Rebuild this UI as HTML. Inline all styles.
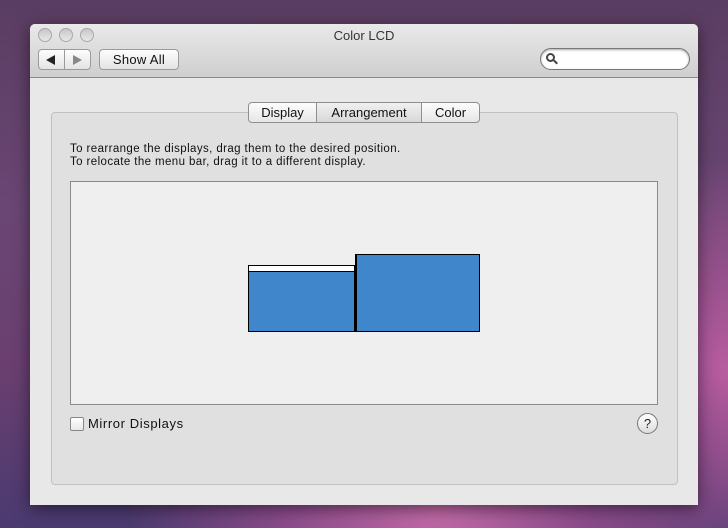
<!DOCTYPE html>
<html><head><style>
*{margin:0;padding:0;box-sizing:border-box}
body{width:728px;height:528px;overflow:hidden;position:relative;font-family:"Liberation Sans",sans-serif;
background:radial-gradient(ellipse at 60% 95%,#c46aa8 0%,#8a4a8a 25%,transparent 50%),radial-gradient(ellipse at 100% 70%,#b85ca0 0%,transparent 40%),linear-gradient(180deg,#5a3d62 0%,#6a4674 40%,#6a3f70 70%,#4a3a70 100%);}
.abs{position:absolute}
.win{left:30px;top:24px;width:668px;height:481px;background:#e8e8e8;border-radius:5px 5px 0 0;box-shadow:0 4px 16px rgba(0,0,0,.5)}
.tb{left:0;top:0;width:668px;height:54px;background:linear-gradient(#e9e9e9,#cfcfcf);border-radius:5px 5px 0 0;border-bottom:1px solid #8a8a8a}
.light{width:14px;height:14px;border-radius:50%;background:linear-gradient(#c8c8c8,#e8e8e8);border:1px solid #a8a8a8;top:4px}
.title{left:0;width:668px;top:4px;text-align:center;font-size:13px;color:#333}
.btn{background:linear-gradient(#fdfdfd,#e4e4e4);border:1px solid #9a9a9a;border-radius:4px;font-size:13px;color:#111;text-align:center}
.group{left:21px;top:88px;width:627px;height:373px;background:#e0e0e0;border:1px solid #c0c0c0;border-radius:4px}
.tab{top:78px;height:21px;font-size:13px;line-height:19px;text-align:center;color:#111;background:linear-gradient(#fdfdfd,#e6e6e6);border:1px solid #8f8f8f}
</style></head><body>
<div class="abs win">
 <div class="abs tb">
  <div class="abs light" style="left:8px"></div>
  <div class="abs light" style="left:29px"></div>
  <div class="abs light" style="left:50px"></div>
  <div class="abs title">Color LCD</div>
  <div class="abs btn" style="left:8px;top:25px;width:53px;height:21px">
   <div class="abs" style="left:25px;top:0;width:1px;height:19px;background:#9a9a9a"></div>
   <div class="abs" style="left:7px;top:5px;width:0;height:0;border-top:5px solid transparent;border-bottom:5px solid transparent;border-right:9px solid #222"></div>
   <div class="abs" style="left:34px;top:5px;width:0;height:0;border-top:5px solid transparent;border-bottom:5px solid transparent;border-left:9px solid #888"></div>
  </div>
  <div class="abs btn" style="left:69px;top:25px;width:80px;height:21px;line-height:19px;letter-spacing:0.3px">Show All</div>
  <div class="abs" style="left:510px;top:24px;width:150px;height:22px;background:#fff;border:1px solid #777;border-radius:11px;box-shadow:inset 0 1px 2px rgba(0,0,0,.35)">
   <div class="abs" style="left:5px;top:4px;width:9px;height:9px;border:2px solid #444;border-radius:50%"></div>
   <div class="abs" style="left:12px;top:12px;width:5px;height:2px;background:#444;transform:rotate(45deg)"></div>
  </div>
 </div>
 <div class="abs group"></div>
 <div class="abs tab" style="left:218px;width:69px;border-radius:4px 0 0 4px">Display</div>
 <div class="abs tab" style="left:286px;width:106px;background:linear-gradient(#f0f0f0,#d8d8d8)">Arrangement</div>
 <div class="abs tab" style="left:391px;width:59px;border-radius:0 4px 4px 0">Color</div>
 <div class="abs" style="left:40px;top:119px;font-size:11.5px;line-height:13px;color:#111;letter-spacing:0.4px">To rearrange the displays, drag them to the desired position.<br>To relocate the menu bar, drag it to a different display.</div>
 <div class="abs" style="left:40px;top:157px;width:588px;height:224px;background:#efefef;border:1px solid #8a8a8a"></div>
 <div class="abs" style="left:218px;top:241px;width:107px;height:67px;background:#3f86cb;border:1px solid #000;border-top:7px solid #000"></div>
 <div class="abs" style="left:219px;top:242px;width:105px;height:5px;background:#fff"></div>
 <div class="abs" style="left:325px;top:230px;width:125px;height:78px;background:#3f86cb;border:1px solid #000;border-left:2px solid #000"></div>
 <div class="abs" style="left:40px;top:393px;width:14px;height:14px;background:linear-gradient(#fff,#e8e8e8);border:1px solid #888;border-radius:2px"></div>
 <div class="abs" style="left:58px;top:392px;font-size:13px;color:#111;letter-spacing:0.6px">Mirror Displays</div>
 <div class="abs" style="left:607px;top:389px;width:21px;height:21px;border-radius:50%;background:linear-gradient(#fff,#ddd);border:1px solid #777;font-size:13px;text-align:center;line-height:19px;color:#222">?</div>
</div>
</body></html>
